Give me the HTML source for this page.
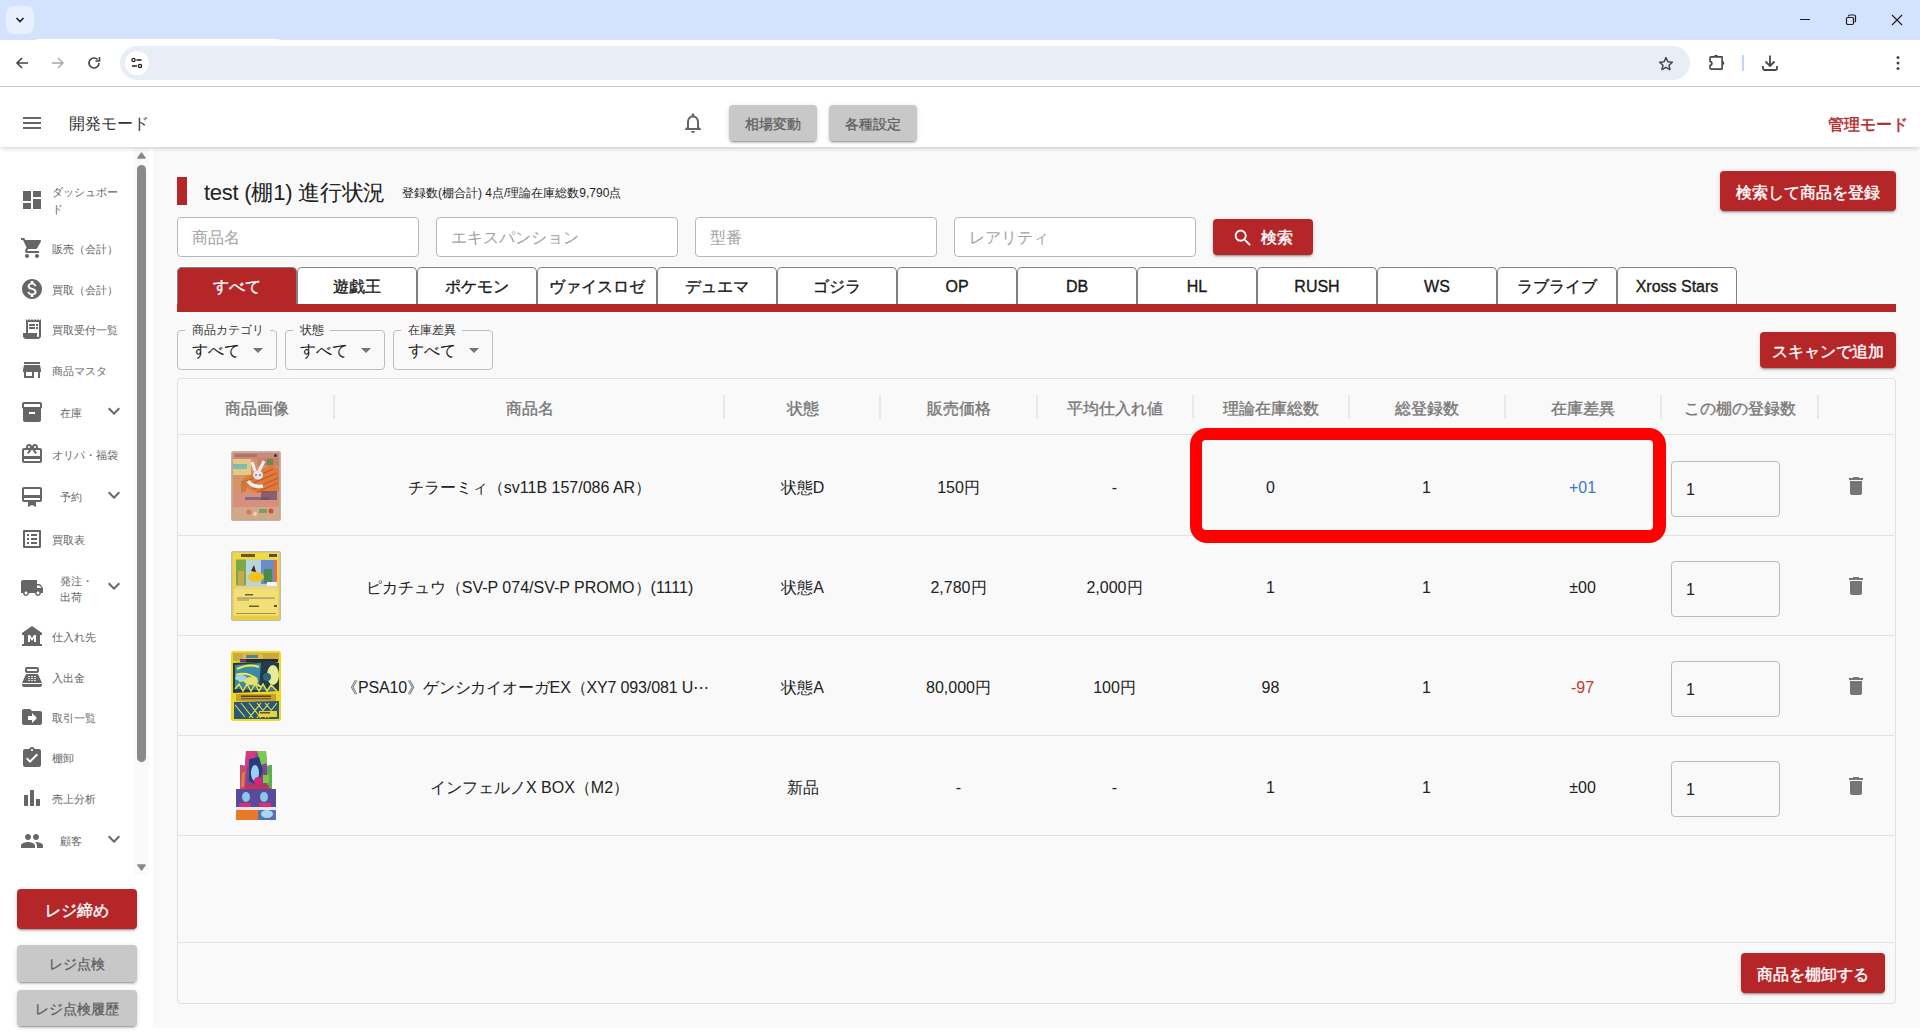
<!DOCTYPE html>
<html><head><meta charset="utf-8">
<style>
*{box-sizing:border-box;margin:0;padding:0}
html,body{width:1920px;height:1032px;overflow:hidden;background:#fff;font-family:"Liberation Sans",sans-serif;color:#222}
.a{position:absolute}
svg{display:block}
.ic{position:absolute;fill:#666}
/* chrome */
#tabstrip{left:0;top:0;width:1920px;height:40px;background:#d3e3fd}
#toolbar{left:0;top:40px;width:1920px;height:47px;background:#fff;border-radius:8px 8px 0 0;border-bottom:1px solid #c7c7c7}
#tabw{left:36px;top:39px;width:244px;height:2px;background:#fff;border-radius:2px 2px 0 0}
#omni{left:120px;top:46px;width:1570px;height:34px;background:#e9eef6;border-radius:17px}
/* header */
#hdr{left:0;top:87px;width:1920px;height:60px;background:#fff;box-shadow:0 2px 4px -1px rgba(0,0,0,.12),0 4px 5px -2px rgba(0,0,0,.08);z-index:3}
#side{left:0;top:147px;width:153px;height:885px;background:#fff}
#main{left:153px;top:147px;width:1767px;height:881px;background:#f9f9f9}
.gbtn{position:absolute;background:#c8c8c8;color:#606060;-webkit-text-stroke:0.3px #606060;padding-top:1px;border-radius:4px;box-shadow:0 3px 1px -2px rgba(0,0,0,.2),0 2px 2px 0 rgba(0,0,0,.14),0 1px 5px 0 rgba(0,0,0,.12);text-align:center}
.rbtn{position:absolute;background:#b52629;color:#fff;border-radius:4px;box-shadow:0 3px 1px -2px rgba(0,0,0,.2),0 2px 2px 0 rgba(0,0,0,.14),0 1px 5px 0 rgba(0,0,0,.12);text-align:center;-webkit-text-stroke:0.4px #fff;padding-top:2px}
.si{position:absolute;font-size:11px;color:#666;line-height:17px}

.inp{position:absolute;background:#fff;border:1px solid #b8b8b8;border-radius:4px}
.ph{position:absolute;font-size:16px;line-height:20px;color:#a2a2a2}
.tab{position:absolute;top:267px;width:120px;height:37px;border:1px solid #808080;border-bottom:none;border-radius:5px 5px 0 0;background:#fff;text-align:center;font-size:16px;line-height:38px;color:#1a1a1a;-webkit-text-stroke:0.35px #1a1a1a}
.tab.act{-webkit-text-stroke:0.35px #fff}
.tab.act{background:#b52629;color:#fff}
.sel{position:absolute;top:330px;width:100px;height:40px;border:1px solid #bdbdbd;border-radius:4px}
.sel .lb{position:absolute;top:-9px;left:7px;padding:0 6px 0 7px;background:#f9f9f9;font-size:12px;line-height:16px;color:#333}
.sel .vl{position:absolute;left:14px;top:10px;font-size:16px;line-height:20px;color:#1a1a1a}
.sel svg{position:absolute;left:68px;top:7px;fill:#757575}
.th{position:absolute;top:399px;padding-left:2px;font-size:16px;line-height:20px;color:#777;-webkit-text-stroke:0.35px #777;text-align:center}
.sep{position:absolute;top:395px;width:2px;height:24px;background:#e8e8e8}
.hl{position:absolute;left:178px;width:1716px;height:1px;background:#e0e0e0}
.td{position:absolute;font-size:16px;line-height:20px;color:#222;text-align:center;white-space:nowrap;padding:1px 0 0 1px}
.qty{position:absolute;left:1671px;width:109px;height:56px;background:#f9f9f9;border:1px solid #bbb;border-radius:4px;font-size:16px;line-height:20px;padding:18px 0 0 14px;color:#222}
</style></head><body>
<!-- browser chrome -->
<div id="tabstrip" class="a"></div>
<div class="a" style="left:6px;top:6px;width:28px;height:28px;background:#e8f0fe;border-radius:8px"></div>
<svg class="a" style="left:12px;top:12px" width="16" height="16" viewBox="0 0 16 16"><path d="M4.5 6 8 9.5 11.5 6" fill="none" stroke="#1f1f1f" stroke-width="1.6"/></svg>
<svg class="a" style="left:1797px;top:12px" width="16" height="16" viewBox="0 0 16 16"><path d="M3 7.5h10" stroke="#1f1f1f" stroke-width="1"/></svg>
<svg class="a" style="left:1843px;top:12px" width="16" height="16" viewBox="0 0 16 16"><rect x="3.5" y="5.5" width="7" height="7" rx="1.2" fill="none" stroke="#1f1f1f" stroke-width="1.2"/><path d="M5.5 4.5V4a1 1 0 0 1 1-1H11a1.5 1.5 0 0 1 1.5 1.5V9a1 1 0 0 1-1 1" fill="none" stroke="#1f1f1f" stroke-width="1.2"/></svg>
<svg class="a" style="left:1889px;top:12px" width="16" height="16" viewBox="0 0 16 16"><path d="M3 3l10 10M13 3 3 13" stroke="#1f1f1f" stroke-width="1.2"/></svg>
<div id="toolbar" class="a"></div>
<div id="tabw" class="a"></div>
<div id="omni" class="a"></div>
<div class="a" style="left:125px;top:51px;width:24px;height:24px;background:#fff;border-radius:12px"></div>
<svg class="a" style="left:129px;top:55px" width="16" height="16" viewBox="0 0 16 16"><circle cx="4.5" cy="5" r="1.6" fill="none" stroke="#1f1f1f" stroke-width="1.3"/><path d="M7.5 5H12.5M3 11H8" stroke="#1f1f1f" stroke-width="1.3"/><circle cx="11" cy="11" r="1.6" fill="none" stroke="#1f1f1f" stroke-width="1.3"/></svg>
<svg class="a" style="left:14px;top:55px" width="16" height="16" viewBox="0 0 16 16"><path d="M14 8H3M8 3 3 8l5 5" fill="none" stroke="#474747" stroke-width="1.6"/></svg>
<svg class="a" style="left:50px;top:55px" width="16" height="16" viewBox="0 0 16 16"><path d="M2 8h11M8 3l5 5-5 5" fill="none" stroke="#a8a8a8" stroke-width="1.4"/></svg>
<svg class="a" style="left:86px;top:55px" width="16" height="16" viewBox="0 0 16 16"><path d="M13 8a5 5 0 1 1-1.5-3.6" fill="none" stroke="#474747" stroke-width="1.6"/><path d="M13.5 2v4h-4" fill="none" stroke="#474747" stroke-width="1.6"/></svg>
<svg class="a" style="left:1657px;top:55px" width="18" height="18" viewBox="0 0 24 24"><path d="m12 3.5 2.5 5.5 6 .6-4.5 4 1.3 5.9L12 16.4l-5.3 3.1L8 13.6l-4.5-4 6-.6z" fill="none" stroke="#474747" stroke-width="2" stroke-linejoin="round"/></svg>
<svg class="a" style="left:1706px;top:53px" width="20" height="20" viewBox="0 0 20 20"><path d="M5 3.9H16.1V16.1H5A1 1 0 0 1 4 15.1V12.4A1.9 1.9 0 0 0 4 8.6V4.9A1 1 0 0 1 5 3.9Z" fill="none" stroke="#474747" stroke-width="1.6" stroke-linejoin="round"/><path d="M7.9 3.9A2.1 2.1 0 0 1 12.1 3.9Z" fill="#474747"/><path d="M16.1 8.1A2.1 2.1 0 0 1 16.1 12.3Z" fill="#474747"/></svg>
<div class="a" style="left:1742px;top:55px;width:2px;height:16px;background:#c2d7f7"></div>
<svg class="a" style="left:1760px;top:53px" width="20" height="20" viewBox="0 0 20 20"><path d="M10 2.5v10M5.5 8.5 10 13l4.5-4.5" fill="none" stroke="#474747" stroke-width="1.8"/><path d="M3 13v2.5a1.5 1.5 0 0 0 1.5 1.5h11a1.5 1.5 0 0 0 1.5-1.5V13" fill="none" stroke="#474747" stroke-width="1.8"/></svg>
<svg class="a" style="left:1888px;top:53px" width="20" height="20" viewBox="0 0 20 20"><circle cx="10" cy="4.5" r="1.5" fill="#474747"/><circle cx="10" cy="10" r="1.5" fill="#474747"/><circle cx="10" cy="15.5" r="1.5" fill="#474747"/></svg>

<!-- app header -->
<div id="hdr" class="a">
  <svg class="ic" style="left:20px;top:24px;fill:#666" width="24" height="24" viewBox="0 0 24 24"><path d="M3 18h18v-2H3zm0-5h18v-2H3zm0-7v2h18V6z"/></svg>
  <div class="a" style="left:69px;top:27px;font-size:16px;line-height:20px;color:#333">開発モード</div>
  <svg class="ic" style="left:681px;top:24px;fill:#666" width="24" height="24" viewBox="0 0 24 24"><path d="M12 22c1.1 0 2-.9 2-2h-4c0 1.1.89 2 2 2m6-6v-5c0-3.07-1.64-5.64-4.5-6.32V4c0-.83-.67-1.5-1.5-1.5s-1.5.67-1.5 1.5v.68C7.63 5.36 6 7.92 6 11v5l-2 2v1h16v-1zm-2 1H8v-6c0-2.48 1.51-4.5 4-4.5s4 2.02 4 4.5z"/></svg>
  <div class="gbtn" style="left:729px;top:18px;width:88px;height:36px;font-size:14px;line-height:36px">相場変動</div>
  <div class="gbtn" style="left:829px;top:18px;width:88px;height:36px;font-size:14px;line-height:36px">各種設定</div>
  <div class="a" style="left:1828px;top:28px;font-size:16px;line-height:20px;color:#b52629;-webkit-text-stroke:0.45px #b52629">管理モード</div>
</div>

<!-- sidebar -->
<div id="side" class="a"></div>
<svg class="ic" style="left:20px;top:188px" width="24" height="24" viewBox="0 0 24 24"><path d="M3 13h8V3H3zm0 8h8v-6H3zm10 0h8V11h-8zm0-18v6h8V3z"/></svg>
<div class="si" style="left:52px;top:184.0px">ダッシュボー</div>
<div class="si" style="left:52px;top:201.0px">ド</div>
<svg class="ic" style="left:20px;top:236px" width="24" height="24" viewBox="0 0 24 24"><path d="M7 18c-1.1 0-1.99.9-1.99 2S5.9 22 7 22s2-.9 2-2-.9-2-2-2M1 2v2h2l3.6 7.59-1.35 2.45c-.16.28-.25.61-.25.96 0 1.1.9 2 2 2h12v-2H7.42c-.14 0-.25-.11-.25-.25l.03-.12.9-1.63h7.45c.75 0 1.41-.41 1.75-1.03l3.58-6.49c.08-.14.12-.31.12-.48 0-.55-.45-1-1-1H5.21l-.94-2zm16 16c-1.1 0-1.99.9-1.99 2s.89 2 1.99 2 2-.9 2-2-.9-2-2-2"/></svg>
<div class="si" style="left:52px;top:241.0px">販売（会計）</div>
<svg class="ic" style="left:20px;top:277px" width="24" height="24" viewBox="0 0 24 24"><path d="M12 2C6.48 2 2 6.48 2 12s4.48 10 10 10 10-4.48 10-10S17.52 2 12 2m1.41 16.09V20h-2.67v-1.93c-1.71-.36-3.16-1.46-3.27-3.4h1.96c.1 1.05.82 1.87 2.65 1.87 1.96 0 2.4-.98 2.4-1.59 0-.83-.44-1.61-2.67-2.14-2.48-.6-4.18-1.62-4.18-3.67 0-1.72 1.39-2.84 3.11-3.21V4h2.67v1.95c1.86.45 2.79 1.86 2.85 3.39H14.3c-.05-1.11-.64-1.87-2.22-1.87-1.5 0-2.4.68-2.4 1.64 0 .84.65 1.39 2.67 1.91s4.18 1.39 4.18 3.91c-.01 1.83-1.38 2.83-3.12 3.16"/></svg>
<div class="si" style="left:52px;top:282.0px">買取（会計）</div>
<svg class="ic" style="left:20px;top:317px" width="24" height="24" viewBox="0 0 24 24"><path d="M19.5 3.5 18 2l-1.5 1.5L15 2l-1.5 1.5L12 2l-1.5 1.5L9 2 7.5 3.5 6 2v14H3v3c0 1.66 1.34 3 3 3h12c1.66 0 3-1.34 3-3V2zM19 19c0 .55-.45 1-1 1s-1-.45-1-1v-3H8V5h11zM9 7h6v2H9zm7 0h2v2h-2zm-7 3h6v2H9zm7 0h2v2h-2z"/></svg>
<div class="si" style="left:52px;top:322.0px">買取受付一覧</div>
<svg class="ic" style="left:20px;top:358px" width="24" height="24" viewBox="0 0 24 24"><path d="M20 4H4v2h16zm1 10v-2l-1-5H4l-1 5v2h1v6h10v-6h4v6h2v-6zm-9 4H6v-4h6z"/></svg>
<div class="si" style="left:52px;top:363.0px">商品マスタ</div>
<svg class="ic" style="left:20px;top:400px" width="24" height="24" viewBox="0 0 24 24"><path d="M20 2H4c-1 0-2 .9-2 2v3.01c0 .72.43 1.34 1 1.69V20c0 1.1 1.1 2 2 2h14c.9 0 2-.9 2-2V8.7c.57-.35 1-.97 1-1.69V4c0-1.1-1-2-2-2m-5 12H9v-2h6zm5-7H4V4l16-.02z"/></svg>
<div class="si" style="left:60px;top:405.0px">在庫</div>
<svg class="ic" style="left:102px;top:399px" width="24" height="24" viewBox="0 0 24 24"><path d="M16.59 8.59 12 13.17 7.41 8.59 6 10l6 6 6-6z"/></svg>
<svg class="ic" style="left:20px;top:442px" width="24" height="24" viewBox="0 0 24 24"><path d="M20 6h-2.18c.11-.31.18-.65.18-1 0-1.66-1.34-3-3-3-1.05 0-1.96.54-2.5 1.35l-.5.67-.5-.68C10.96 2.54 10.05 2 9 2 7.34 2 6 3.34 6 5c0 .35.07.69.18 1H4c-1.11 0-1.99.89-1.99 2L2 19c0 1.11.89 2 2 2h16c1.11 0 2-.89 2-2V8c0-1.11-.89-2-2-2m-5-2c.55 0 1 .45 1 1s-.45 1-1 1-1-.45-1-1 .45-1 1-1M9 4c.55 0 1 .45 1 1s-.45 1-1 1-1-.45-1-1 .45-1 1-1m11 15H4v-2h16zm0-5H4V8h5.08L7 10.83 8.62 12 11 8.76l1-1.36 1 1.36L15.38 12 17 10.83 14.92 8H20z"/></svg>
<div class="si" style="left:52px;top:447.0px">オリパ・福袋</div>
<svg class="ic" style="left:20px;top:485px" width="24" height="24" viewBox="0 0 24 24"><path d="M20 2H4c-1.11 0-2 .89-2 2v11c0 1.11.89 2 2 2h4v5l4-2 4 2v-5h4c1.11 0 2-.89 2-2V4c0-1.11-.89-2-2-2m0 13H4v-2h16zm0-5H4V4h16z"/></svg>
<div class="si" style="left:60px;top:489.0px">予約</div>
<svg class="ic" style="left:102px;top:483px" width="24" height="24" viewBox="0 0 24 24"><path d="M16.59 8.59 12 13.17 7.41 8.59 6 10l6 6 6-6z"/></svg>
<svg class="ic" style="left:20px;top:527px" width="24" height="24" viewBox="0 0 24 24"><path d="M19 5v14H5V5zm1.1-2H3.9c-.5 0-.9.4-.9.9v16.2c0 .4.4.9.9.9h16.2c.4 0 .9-.5.9-.9V3.9c0-.5-.5-.9-.9-.9M11 7h6v2h-6zm0 4h6v2h-6zm0 4h6v2h-6zM7 7h2v2H7zm0 4h2v2H7zm0 4h2v2H7z"/></svg>
<div class="si" style="left:52px;top:532.0px">買取表</div>
<svg class="ic" style="left:20px;top:576px" width="24" height="24" viewBox="0 0 24 24"><path d="M20 8h-3V4H3c-1.1 0-2 .9-2 2v11h2c0 1.66 1.34 3 3 3s3-1.34 3-3h6c0 1.66 1.34 3 3 3s3-1.34 3-3h2v-5zM6 18.5c-.83 0-1.5-.67-1.5-1.5s.67-1.5 1.5-1.5 1.5.67 1.5 1.5-.67 1.5-1.5 1.5m13.5-9 1.96 2.5H17V9.5zm-1.5 9c-.83 0-1.5-.67-1.5-1.5s.67-1.5 1.5-1.5 1.5.67 1.5 1.5-.67 1.5-1.5 1.5"/></svg>
<div class="si" style="left:60px;top:572.5px">発注・</div>
<div class="si" style="left:60px;top:589.0px">出荷</div>
<svg class="ic" style="left:102px;top:574px" width="24" height="24" viewBox="0 0 24 24"><path d="M16.59 8.59 12 13.17 7.41 8.59 6 10l6 6 6-6z"/></svg>
<svg class="ic" style="left:20px;top:624px" width="24" height="24" viewBox="0 0 24 24"><path d="M22 11V9L12 2 2 9v2h2v9H2v2h20v-2h-2v-9zm-6 7h-2v-4l-2 3-2-3v4H8v-7h2l2 3 2-3h2z"/></svg>
<div class="si" style="left:52px;top:629.0px">仕入れ先</div>
<svg class="ic" style="left:20px;top:665px" width="24" height="24" viewBox="0 0 24 24"><path d="M17 2H7c-1.1 0-2 .9-2 2v2c0 1.1.9 2 2 2h10c1.1 0 2-.9 2-2V4c0-1.1-.9-2-2-2m0 4H7V4h10zm3 16H4c-1.1 0-2-.9-2-2v-1h20v1c0 1.1-.9 2-2 2m-1.47-11.81C18.21 9.47 17.49 9 16.7 9H7.3c-.79 0-1.51.47-1.83 1.19L2 18h20zM9.5 16h-1c-.28 0-.5-.22-.5-.5s.22-.5.5-.5h1c.28 0 .5.22.5.5s-.22.5-.5.5m0-2h-1c-.28 0-.5-.22-.5-.5s.22-.5.5-.5h1c.28 0 .5.22.5.5s-.22.5-.5.5m0-2h-1c-.28 0-.5-.22-.5-.5s.22-.5.5-.5h1c.28 0 .5.22.5.5s-.22.5-.5.5m3 4h-1c-.28 0-.5-.22-.5-.5s.22-.5.5-.5h1c.28 0 .5.22.5.5s-.22.5-.5.5m0-2h-1c-.28 0-.5-.22-.5-.5s.22-.5.5-.5h1c.28 0 .5.22.5.5s-.22.5-.5.5m0-2h-1c-.28 0-.5-.22-.5-.5s.22-.5.5-.5h1c.28 0 .5.22.5.5s-.22.5-.5.5m3 4h-1c-.28 0-.5-.22-.5-.5s.22-.5.5-.5h1c.28 0 .5.22.5.5s-.22.5-.5.5m0-2h-1c-.28 0-.5-.22-.5-.5s.22-.5.5-.5h1c.28 0 .5.22.5.5s-.22.5-.5.5m0-2h-1c-.28 0-.5-.22-.5-.5s.22-.5.5-.5h1c.28 0 .5.22.5.5s-.22.5-.5.5"/></svg>
<div class="si" style="left:52px;top:670.0px">入出金</div>
<svg class="ic" style="left:20px;top:705px" width="24" height="24" viewBox="0 0 24 24"><path d="M20 6h-8l-2-2H4c-1.1 0-1.99.9-1.99 2L2 18c0 1.1.9 2 2 2h16c1.1 0 2-.9 2-2V8c0-1.1-.9-2-2-2m-8 12v-3H8v-4h4V8l5 5z"/></svg>
<div class="si" style="left:52px;top:710.0px">取引一覧</div>
<svg class="ic" style="left:20px;top:746px" width="24" height="24" viewBox="0 0 24 24"><path d="M19 3h-4.18C14.4 1.84 13.3 1 12 1s-2.4.84-2.82 2H5c-1.1 0-2 .9-2 2v14c0 1.1.9 2 2 2h14c1.1 0 2-.9 2-2V5c0-1.1-.9-2-2-2m-7 0c.55 0 1 .45 1 1s-.45 1-1 1-1-.45-1-1 .45-1 1-1m-2 14-4-4 1.41-1.41L10 14.17l6.59-6.59L18 9z"/></svg>
<div class="si" style="left:52px;top:750.0px">棚卸</div>
<svg class="ic" style="left:20px;top:786px" width="24" height="24" viewBox="0 0 24 24"><path d="M4 9h4v11H4zm12 4h4v7h-4zm-6-9h4v16h-4z"/></svg>
<div class="si" style="left:52px;top:791.0px">売上分析</div>
<svg class="ic" style="left:20px;top:829px" width="24" height="24" viewBox="0 0 24 24"><path d="M16 11c1.66 0 2.99-1.34 2.99-3S17.66 5 16 5s-3 1.34-3 3 1.34 3 3 3m-8 0c1.66 0 2.99-1.34 2.99-3S9.66 5 8 5 5 6.34 5 8s1.34 3 3 3m0 2c-2.33 0-7 1.17-7 3.5V19h14v-2.5c0-2.33-4.67-3.5-7-3.5m8 0c-.29 0-.62.02-.97.05 1.16.84 1.97 1.97 1.97 3.45V19h6v-2.5c0-2.33-4.67-3.5-7-3.5"/></svg>
<div class="si" style="left:60px;top:833.0px">顧客</div>
<svg class="ic" style="left:102px;top:827px" width="24" height="24" viewBox="0 0 24 24"><path d="M16.59 8.59 12 13.17 7.41 8.59 6 10l6 6 6-6z"/></svg>
<div class="a" style="left:134px;top:147px;width:15px;height:728px;background:#fafafa"></div>
<svg class="a" style="left:137px;top:152px" width="9" height="7" viewBox="0 0 9 7"><path d="M4.5 1.2 8 6H1z" fill="#888" stroke="#888" stroke-width="1.6" stroke-linejoin="round"/></svg>
<div class="a" style="left:137px;top:165px;width:9px;height:597px;background:#8a8a8a;border-radius:4.5px"></div>
<svg class="a" style="left:137px;top:864px" width="9" height="7" viewBox="0 0 9 7"><path d="M1 1H8L4.5 5.8z" fill="#888" stroke="#888" stroke-width="1.6" stroke-linejoin="round"/></svg>
<div class="rbtn" style="left:17px;top:889px;width:120px;height:40px;font-size:16px;line-height:40px">レジ締め</div>
<div class="gbtn" style="left:17px;top:945px;width:120px;height:37px;font-size:14px;line-height:37px">レジ点検</div>
<div class="gbtn" style="left:17px;top:990px;width:120px;height:36px;font-size:14px;line-height:36px">レジ点検履歴</div>

<!-- main -->
<div id="main" class="a"></div>

<div class="a" style="left:177px;top:177px;width:10px;height:28px;background:#b52629"></div>
<div class="a" style="left:204px;top:179px;font-size:22px;line-height:28px;color:#222;letter-spacing:-0.25px">test (棚1) 進行状況</div>
<div class="a" style="left:402px;top:185px;font-size:12px;line-height:16px;color:#1e1e1e">登録数(棚合計) 4点/理論在庫総数9,790点</div>
<div class="rbtn" style="left:1720px;top:171px;width:176px;height:40px;font-size:16px;line-height:40px">検索して商品を登録</div>

<div class="inp" style="left:177px;top:217px;width:242px;height:40px"></div>
<div class="ph" style="left:192px;top:228px">商品名</div>
<div class="inp" style="left:436px;top:217px;width:242px;height:40px"></div>
<div class="ph" style="left:451px;top:228px">エキスパンション</div>
<div class="inp" style="left:695px;top:217px;width:242px;height:40px"></div>
<div class="ph" style="left:710px;top:228px">型番</div>
<div class="inp" style="left:954px;top:217px;width:242px;height:40px"></div>
<div class="ph" style="left:969px;top:228px">レアリティ</div>
<div class="rbtn" style="left:1213px;top:219px;width:100px;height:36px;font-size:16px;line-height:36px"></div>
<svg class="a" style="left:1232px;top:227px;fill:#fff" width="22" height="22" viewBox="0 0 24 24"><path d="M15.5 14h-.79l-.28-.27C15.41 12.59 16 11.11 16 9.5 16 5.91 13.09 3 9.5 3S3 5.91 3 9.5 5.91 16 9.5 16c1.61 0 3.09-.59 4.23-1.57l.27.28v.79l5 4.99L20.49 19zm-6 0C7.01 14 5 11.99 5 9.5S7.01 5 9.5 5 14 7.01 14 9.5 11.99 14 9.5 14"/></svg>
<div class="a" style="left:1261px;top:228px;font-size:16px;line-height:20px;color:#fff;-webkit-text-stroke:0.4px #fff">検索</div>
<div class="tab act" style="left:177px">すべて</div>
<div class="tab" style="left:297px">遊戯王</div>
<div class="tab" style="left:417px">ポケモン</div>
<div class="tab" style="left:537px">ヴァイスロゼ</div>
<div class="tab" style="left:657px">デュエマ</div>
<div class="tab" style="left:777px">ゴジラ</div>
<div class="tab" style="left:897px">OP</div>
<div class="tab" style="left:1017px">DB</div>
<div class="tab" style="left:1137px">HL</div>
<div class="tab" style="left:1257px">RUSH</div>
<div class="tab" style="left:1377px">WS</div>
<div class="tab" style="left:1497px">ラブライブ</div>
<div class="tab" style="left:1617px">Xross Stars</div>
<div class="a" style="left:177px;top:304px;width:1719px;height:8px;background:#b52629"></div>
<div class="sel" style="left:177px"><div class="lb">商品カテゴリ</div><div class="vl">すべて</div><svg width="24" height="24" viewBox="0 0 24 24"><path d="M7 10l5 5 5-5z"/></svg></div>
<div class="sel" style="left:285px"><div class="lb">状態</div><div class="vl">すべて</div><svg width="24" height="24" viewBox="0 0 24 24"><path d="M7 10l5 5 5-5z"/></svg></div>
<div class="sel" style="left:393px"><div class="lb">在庫差異</div><div class="vl">すべて</div><svg width="24" height="24" viewBox="0 0 24 24"><path d="M7 10l5 5 5-5z"/></svg></div>
<div class="rbtn" style="left:1760px;top:332px;width:136px;height:36px;font-size:16px;line-height:36px;font-weight:normal">スキャンで追加</div>
<div class="a" style="left:177px;top:378px;width:1719px;height:626px;border:1px solid #e0e0e0;border-radius:4px"></div>
<div class="th" style="left:178px;width:156px">商品画像</div>
<div class="th" style="left:334px;width:390px">商品名</div>
<div class="th" style="left:724px;width:156px">状態</div>
<div class="th" style="left:880px;width:156px">販売価格</div>
<div class="th" style="left:1036px;width:156px">平均仕入れ値</div>
<div class="th" style="left:1192px;width:156px">理論在庫総数</div>
<div class="th" style="left:1348px;width:156px">総登録数</div>
<div class="th" style="left:1504px;width:156px">在庫差異</div>
<div class="th" style="left:1660px;width:157px">この棚の登録数</div>
<div class="sep" style="left:333px"></div>
<div class="sep" style="left:723px"></div>
<div class="sep" style="left:879px"></div>
<div class="sep" style="left:1036px"></div>
<div class="sep" style="left:1192px"></div>
<div class="sep" style="left:1348px"></div>
<div class="sep" style="left:1504px"></div>
<div class="sep" style="left:1660px"></div>
<div class="sep" style="left:1817px"></div>
<div class="hl" style="top:434px"></div>
<div class="hl" style="top:535px"></div>
<div class="hl" style="top:635px"></div>
<div class="hl" style="top:735px"></div>
<div class="hl" style="top:835px"></div>
<div class="hl" style="top:942px"></div>
<div class="td" style="left:334px;width:390px;top:477px;color:#222">チラーミィ（sv11B 157/086 AR）</div>
<div class="td" style="left:724px;width:156px;top:477px;color:#222">状態D</div>
<div class="td" style="left:880px;width:156px;top:477px;color:#222">150円</div>
<div class="td" style="left:1036px;width:156px;top:477px;color:#222">-</div>
<div class="td" style="left:1192px;width:156px;top:477px;color:#222">0</div>
<div class="td" style="left:1348px;width:156px;top:477px;color:#222">1</div>
<div class="td" style="left:1504px;width:156px;top:477px;color:#3a78c3">+01</div>
<div class="qty" style="top:461px">1</div>
<svg class="ic" style="left:1844px;top:474px;fill:#757575" width="24" height="24" viewBox="0 0 24 24"><path d="M6 19c0 1.1.9 2 2 2h8c1.1 0 2-.9 2-2V7H6zM19 4h-3.5l-1-1h-5l-1 1H5v2h14z"/></svg>
<div class="a" style="left:231px;top:451px;width:50px;height:70px;filter:blur(0.35px)"><svg width="50" height="70" viewBox="0 0 50 70">
<rect x="0" y="0" width="50" height="70" rx="2" fill="#bfb6ae"/>
<rect x="1.5" y="1.5" width="47" height="67" fill="#d8926a"/>
<rect x="2" y="2" width="46" height="6" fill="#c98a7c"/>
<rect x="4" y="3" width="22" height="3" fill="#b07070"/>
<circle cx="44.5" cy="4.5" r="1.5" fill="#333"/>
<rect x="2" y="8" width="18" height="16" fill="#e2c986"/>
<rect x="2" y="13" width="14" height="5" fill="#7fbcb0"/>
<rect x="26" y="7" width="22" height="8" fill="#c7806a"/>
<rect x="36" y="8" width="6" height="6" fill="#6a8a4a"/>
<polygon points="12,27 40,14 48,18 48,40 30,44 14,36" fill="#e07a3c"/>
<path d="M16 30 42 18M18 34 46 22M22 38 47 27M26 41 47 32" stroke="#b85a2a" stroke-width="1.2"/>
<polygon points="10,30 16,28 15,40 10,42" fill="#c97a3a"/>
<path d="M21 11 Q23 16 24 20 M33 10 Q30 16 28 20" stroke="#f4f0f4" stroke-width="3" fill="none"/>
<ellipse cx="27" cy="24" rx="5" ry="4.5" fill="#e8e4ea"/>
<path d="M17 30 Q22 37 32 35" stroke="#f0eef2" stroke-width="3.5" fill="none"/>
<circle cx="25" cy="24" r="0.8" fill="#333"/><circle cx="29" cy="24" r="0.8" fill="#333"/>
<rect x="2" y="42" width="46" height="14" fill="#d8907e"/>
<rect x="14" y="46" width="24" height="3" fill="#8a6a78"/>
<rect x="30" y="40" width="16" height="9" fill="#6a4a6a" opacity=".7"/>
<rect x="2" y="56" width="46" height="12" fill="#cfa98a"/>
<circle cx="18" cy="61" r="2.5" fill="#e0705a"/><circle cx="24" cy="63" r="2" fill="#f0d0b0"/><circle cx="40" cy="60" r="2.5" fill="#d84a40"/>
<rect x="28" y="58" width="8" height="4" fill="#7aa060"/>
</svg></div>
<div class="td" style="left:334px;width:390px;top:577px;color:#222">ピカチュウ（SV-P 074/SV-P PROMO）(1111)</div>
<div class="td" style="left:724px;width:156px;top:577px;color:#222">状態A</div>
<div class="td" style="left:880px;width:156px;top:577px;color:#222">2,780円</div>
<div class="td" style="left:1036px;width:156px;top:577px;color:#222">2,000円</div>
<div class="td" style="left:1192px;width:156px;top:577px;color:#222">1</div>
<div class="td" style="left:1348px;width:156px;top:577px;color:#222">1</div>
<div class="td" style="left:1504px;width:156px;top:577px;color:#222">±00</div>
<div class="qty" style="top:561px">1</div>
<svg class="ic" style="left:1844px;top:574px;fill:#757575" width="24" height="24" viewBox="0 0 24 24"><path d="M6 19c0 1.1.9 2 2 2h8c1.1 0 2-.9 2-2V7H6zM19 4h-3.5l-1-1h-5l-1 1H5v2h14z"/></svg>
<div class="a" style="left:231px;top:551px;width:50px;height:70px;filter:blur(0.35px)"><svg width="50" height="70" viewBox="0 0 50 70">
<rect x="0" y="0" width="50" height="70" rx="2" fill="#bcbcbc"/>
<rect x="1.5" y="1.5" width="47" height="67" fill="#f1d443"/>
<rect x="2" y="2" width="46" height="6" fill="#f3d93a"/>
<rect x="10" y="3" width="14" height="3" fill="#6a5a20"/>
<rect x="38" y="3" width="8" height="3" fill="#5a5040"/>
<rect x="5" y="8.5" width="41" height="26" fill="#b8d4dc"/>
<rect x="5" y="8.5" width="10" height="26" fill="#7aa84a"/>
<rect x="7" y="20" width="6" height="14" fill="#c8a848"/>
<rect x="30" y="9" width="14" height="24" fill="#6a8cc8"/>
<rect x="43" y="9" width="3" height="24" fill="#e07048"/>
<rect x="33" y="18" width="8" height="14" fill="#4a8a50"/>
<ellipse cx="25" cy="26" rx="8" ry="5" fill="#f2c21a"/>
<polygon points="20,20 23,14 25,21" fill="#3a2a10"/>
<rect x="36" y="31" width="10" height="4" fill="#f4f4f4"/>
<rect x="5" y="35.5" width="41" height="2" fill="#ddd4b8"/>
<rect x="3" y="38" width="44" height="27" fill="#f3e075"/>
<rect x="14" y="43" width="8" height="1.5" fill="#6a6030"/>
<rect x="6" y="46.5" width="38" height="1.2" fill="#a09060"/>
<rect x="6" y="48.5" width="12" height="1" fill="#a09060"/>
<rect x="18" y="54.5" width="10" height="1.5" fill="#6a6030"/>
<rect x="43" y="54" width="3" height="2" fill="#5a5040"/>
<rect x="5" y="62" width="40" height="1" fill="#a09060"/>
<rect x="2" y="64.5" width="46" height="4" fill="#eccf30"/>
</svg></div>
<div class="td" style="left:330px;width:390px;top:677px;color:#222;letter-spacing:-0.15px">《PSA10》ゲンシカイオーガEX（XY7 093/081 U⋯</div>
<div class="td" style="left:724px;width:156px;top:677px;color:#222">状態A</div>
<div class="td" style="left:880px;width:156px;top:677px;color:#222">80,000円</div>
<div class="td" style="left:1036px;width:156px;top:677px;color:#222">100円</div>
<div class="td" style="left:1192px;width:156px;top:677px;color:#222">98</div>
<div class="td" style="left:1348px;width:156px;top:677px;color:#222">1</div>
<div class="td" style="left:1504px;width:156px;top:677px;color:#c0392b">-97</div>
<div class="qty" style="top:661px">1</div>
<svg class="ic" style="left:1844px;top:674px;fill:#757575" width="24" height="24" viewBox="0 0 24 24"><path d="M6 19c0 1.1.9 2 2 2h8c1.1 0 2-.9 2-2V7H6zM19 4h-3.5l-1-1h-5l-1 1H5v2h14z"/></svg>
<div class="a" style="left:231px;top:651px;width:50px;height:70px;filter:blur(0.35px)"><svg width="50" height="70" viewBox="0 0 50 70">
<rect x="0" y="0" width="50" height="70" rx="2" fill="#f0d81c"/>
<rect x="2" y="2" width="46" height="8" fill="#c9a848"/>
<rect x="12" y="3" width="20" height="5" fill="#d8c040"/>
<rect x="15" y="4" width="12" height="3" fill="#5080a0"/>
<rect x="9" y="8" width="38" height="3" fill="#2a2a30"/>
<rect x="9" y="8.5" width="6" height="2" fill="#7a40a0"/>
<polygon points="2,12 40,10 48,12 48,40 2,42" fill="#243c48"/>
<polygon points="4,14 30,12 28,36 4,38" fill="#3a8aa8"/>
<path d="M6 18 Q18 12 28 16 M5 24 Q16 20 26 28 M8 30 Q20 28 30 36" stroke="#f4e84a" stroke-width="2" fill="none"/>
<ellipse cx="20" cy="30" rx="7" ry="4" fill="#e8e070"/>
<ellipse cx="10" cy="27" rx="6" ry="3" fill="#a0d8e8"/>
<ellipse cx="42" cy="24" rx="6" ry="10" fill="#e6ec9a"/>
<circle cx="36" cy="26" r="4" fill="#2a6878"/>
<path d="M4 38 8 33 12 40 16 33 20 40 24 33 28 40 32 33 36 40 40 34 46 40" stroke="#f0e040" stroke-width="1.5" fill="#3a7aa0"/>
<rect x="5" y="43" width="40" height="7" fill="#c8a030"/>
<rect x="10" y="44.5" width="30" height="1.5" fill="#5a4010"/>
<rect x="10" y="47" width="30" height="1.3" fill="#7a6020"/>
<polygon points="3,51 48,50 48,68 3,68" fill="#2a5878"/>
<path d="M4 54 14 66M10 52 22 67M18 52 30 67M26 52 38 67M34 52 46 66M46 52 34 67M38 52 26 67M30 52 18 67" stroke="#e8e040" stroke-width="1.1"/>
<rect x="28" y="60" width="18" height="6" fill="#e8d040"/>
<rect x="29" y="61" width="10" height="1.5" fill="#6a5010"/>
</svg></div>
<div class="td" style="left:334px;width:390px;top:777px;color:#222">インフェルノX BOX（M2）</div>
<div class="td" style="left:724px;width:156px;top:777px;color:#222">新品</div>
<div class="td" style="left:880px;width:156px;top:777px;color:#222">-</div>
<div class="td" style="left:1036px;width:156px;top:777px;color:#222">-</div>
<div class="td" style="left:1192px;width:156px;top:777px;color:#222">1</div>
<div class="td" style="left:1348px;width:156px;top:777px;color:#222">1</div>
<div class="td" style="left:1504px;width:156px;top:777px;color:#222">±00</div>
<div class="qty" style="top:761px">1</div>
<svg class="ic" style="left:1844px;top:774px;fill:#757575" width="24" height="24" viewBox="0 0 24 24"><path d="M6 19c0 1.1.9 2 2 2h8c1.1 0 2-.9 2-2V7H6zM19 4h-3.5l-1-1h-5l-1 1H5v2h14z"/></svg>
<div class="a" style="left:231px;top:751px;width:50px;height:70px;filter:blur(0.35px)"><svg width="50" height="70" viewBox="0 0 50 70">
<rect x="0" y="0" width="50" height="70" fill="#fbfbfb"/>
<polygon points="15,0 35,0 36,15 41,14 41,38 45,38 45,69 5,69 5,38 9,38 9,14 14,15" fill="#7a4a8a"/>
<polygon points="15,0 26,0 22,14 14,15" fill="#d83a80"/>
<polygon points="26,0 35,0 36,12 30,14" fill="#7ac850"/>
<polygon points="9,14 16,15 14,38 9,38" fill="#c84a70"/>
<polygon points="11,22 14,20 13,36 10,36" fill="#e08040"/>
<polygon points="36,15 41,14 41,38 36,36" fill="#5ab050"/>
<polygon points="18,8 28,6 32,20 26,34 18,30" fill="#2a3a7a"/>
<ellipse cx="24" cy="22" rx="4" ry="8" fill="#9ad0ee"/>
<circle cx="27" cy="30" r="4" fill="#e0207a"/>
<rect x="32" y="24" width="6" height="8" fill="#80c840"/>
<rect x="14" y="34" width="24" height="4" fill="#c8305a"/>
<rect x="5" y="38" width="40" height="20" fill="#5a4a9a"/>
<ellipse cx="15" cy="46" rx="4" ry="5" fill="#8ac8e8"/>
<ellipse cx="33" cy="46" rx="4" ry="5" fill="#8ac8e8"/>
<rect x="8" y="52" width="12" height="4" fill="#d83070"/>
<rect x="28" y="52" width="12" height="4" fill="#d83070"/>
<rect x="5" y="56" width="40" height="3" fill="#e8e8f0"/>
<rect x="5" y="59" width="22" height="10" fill="#e87a2a"/>
<rect x="27" y="59" width="18" height="10" fill="#5a70b0"/>
<ellipse cx="36" cy="63" rx="6" ry="4" fill="#a8d8f0"/>
</svg></div>
<svg class="a" style="left:1190px;top:428px" width="476" height="115" viewBox="0 0 476 115"><path fill="#ff0000" fill-rule="evenodd" d="M17 0H459A17 17 0 0 1 476 17V98A17 17 0 0 1 459 115H17A17 17 0 0 1 0 98V17A17 17 0 0 1 17 0ZM16 12H459A4 4 0 0 1 463 16V98A4 4 0 0 1 459 102H16A4 4 0 0 1 12 98V16A4 4 0 0 1 16 12Z"/></svg>
<div class="rbtn" style="left:1741px;top:953px;width:144px;height:40px;font-size:16px;line-height:40px">商品を棚卸する</div>
</body></html>
